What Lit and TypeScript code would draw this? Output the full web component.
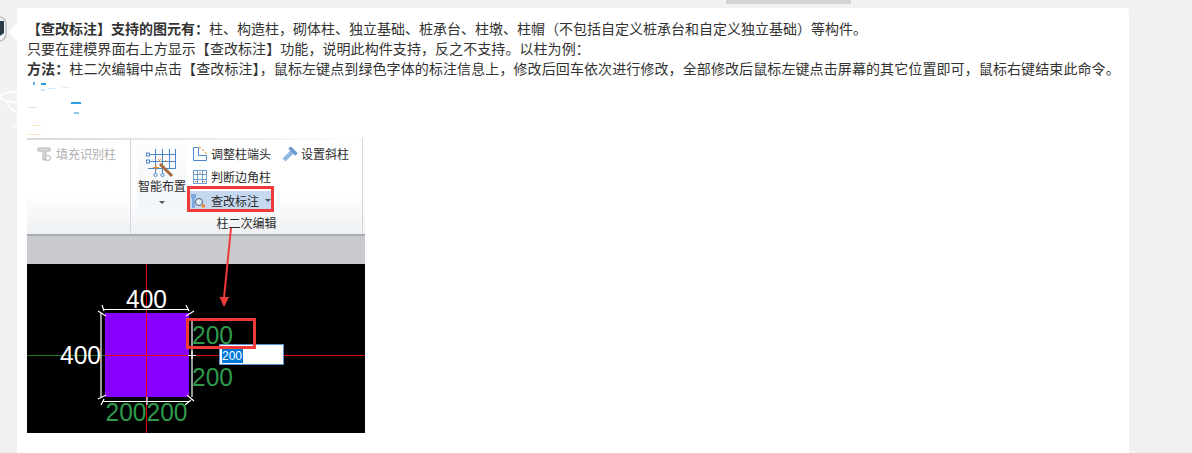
import { LitElement, html, css, svg } from "lit";
import { customElement } from "lit/decorators.js";

@customElement("app-root")
export class AppRoot extends LitElement {
  static styles = css`
    :host { display: block; width: 1192px; height: 453px; overflow: hidden; background: #f1f1f1; font-family: "Liberation Sans", "Noto Sans CJK SC", sans-serif; position: relative; }
    .tab { position: absolute; left: 726px; top: 0; width: 125px; height: 4px; background: #d3d3d3; }
    .avatar { position: absolute; left: -16px; top: 16px; }
    .swirl { position: absolute; left: 0; top: 80px; }
    .card { position: absolute; left: 17px; top: 8px; width: 1112px; height: 445px; background: #fff; border-radius: 3px 3px 0 0; box-sizing: border-box; padding: 11px 10px 0; }
    .card::before { content: ""; position: absolute; left: -9px; top: 15px; border: 9px solid transparent; border-left: 0; border-right-color: #fff; }
    .text { font-size: 14px; line-height: 20px; color: #333; white-space: nowrap; }
    .text b { font-weight: 700; }
    .l2 { letter-spacing: 0.07px; }
    .l3 { letter-spacing: 0.1px; }
    .noise { height: 59px; position: relative; }
    .noise svg { position: absolute; left: -27px; top: 0; }
    .shot { width: 338px; position: relative; }
    .ribbon { height: 96px; display: flex; background: linear-gradient(90deg, #d9d9d9, #f2f2f2 70%, #fff) top / 100% 2px no-repeat, linear-gradient(#fff 0%, #fff 55%, #eef1f3 100%); border-bottom: 2px solid #a9adb1; font-size: 12px; color: #2a2a2a; }
    .g1 { width: 104px; border-right: 1px solid #d4d8dc; padding: 7px 0 0 10px; box-sizing: border-box; color: #b0b0b0; }
    .g2 { width: 232px; border-right: 1px solid #d4d8dc; box-sizing: border-box; display: flex; flex-direction: column; }
    .g2main { display: flex; padding-left: 6px; gap: 3px; flex: 1; }
    .big { width: 50px; height: 65px; margin-top: 7px; padding-top: 3px; box-sizing: border-box; display: flex; flex-direction: column; align-items: center; background: linear-gradient(#fbfcfd, #f3f6f8); }
    .big svg { flex: none; }
    .big span { line-height: 16px; margin-top: 1px; white-space: nowrap; }
    .caret { width: 0; height: 0; border: 3px solid transparent; border-top: 3px solid #555; border-bottom: 0; margin-top: 6px; }
    .tools { display: flex; flex-direction: column; padding-top: 4px; }
    .row { display: flex; gap: 11px; height: 23px; align-items: center; padding-left: 2px; }
    .item { display: flex; align-items: center; gap: 3px; white-space: nowrap; }
    .item svg { flex: none; }
    .item.on { background: #c5d8f0; height: 19px; width: 82px; margin-top: 3px; gap: 4px; }
    .item.on .caret { margin: 0 0 0 2px; }
    .glabel { text-align: center; font-size: 12px; line-height: 16px; padding-bottom: 2px; }
    .gray { height: 28px; background: #c8cacd; }
    .cad { display: block; }
    .over { position: absolute; left: 0; top: 0; pointer-events: none; }
  `;

  render() {
    return html`
      <div class="tab"></div>
      <svg class="avatar" width="24" height="26" viewBox="0 0 24 26">
        <rect x="1" y="1" width="21" height="24" rx="7" fill="#f4f4f4" stroke="#bdbdbd" stroke-width="1.500"/>
        <path d="M5 5h15v12q-6 6-15 2z" fill="#2b3a44"/>
      </svg>
      <svg class="swirl" width="17" height="60" viewBox="0 0 17 60" fill="none" stroke="#fff" stroke-width="1.500">
        <ellipse cx="25" cy="17" rx="25" ry="6"/>
        <path d="M17 33Q8 27 7 23"/>
        <path d="M14 47h3"/>
      </svg>
      <div class="card">
        <div class="text">
          <div><b>【查改标注】支持的图元有：</b>柱、构造柱，砌体柱、独立基础、桩承台、柱墩、柱帽（不包括自定义桩承台和自定义独立基础）等构件。</div>
          <div class="l2">只要在建模界面右上方显示【查改标注】功能，说明此构件支持，反之不支持。以柱为例：</div>
          <div class="l3"><b>方法：</b>柱二次编辑中点击【查改标注】，鼠标左键点到绿色字体的标注信息上，修改后回车依次进行修改，全部修改后鼠标左键点击屏幕的其它位置即可，鼠标右键结束此命令。</div>
        </div>
        <div class="noise">
          <svg width="120" height="59" viewBox="0 79 120 59">
            <rect x="33" y="82" width="2" height="3" fill="#5ab4ea"/>
            <rect x="41" y="83" width="5" height="2" fill="#2a9fe0"/>
            <rect x="41" y="89" width="4" height="2" fill="#cfe6f7"/>
            <rect x="48" y="88" width="7" height="1" fill="#cfe6f7"/>
            <rect x="62" y="87" width="8" height="1" fill="#dff0fa"/>
            <rect x="71" y="102" width="10" height="2" fill="#2a9fe0"/>
            <rect x="74" y="112" width="5" height="2" fill="#8cc6ee"/>
            <rect x="28" y="107" width="9" height="1" fill="#cfe6f7"/>
            <rect x="33" y="125" width="8" height="1" fill="#f6e2b4"/>
            <rect x="27" y="134" width="14" height="1" fill="#f6e8c8"/>
          </svg>
        </div>
        <div class="shot">
          <div class="ribbon">
            <div class="g1">
              <div class="item">
                <svg width="16" height="16" viewBox="0 0 16 16" fill="none" stroke="#b4b4b4"><path d="M1 2h12v3H9v9H6V5H1z" fill="#ddd"/><circle cx="11" cy="12" r="2.500" fill="#fff"/></svg>
                <span>填充识别柱</span>
              </div>
            </div>
            <div class="g2">
              <div class="g2main">
                <div class="big">
                  <svg width="36" height="30" viewBox="0 0 36 30" fill="none">
                    <path d="M11.500 1v20M18.500 1v20M25.500 1v20M31.500 1v20M4 6.500h28M4 13.500h28M4 20.500h28" stroke="#4d86c9"/>
                    <g fill="#fff" stroke="#4d86c9"><rect x="2.500" y="5" width="3" height="3"/><rect x="2.500" y="12" width="3" height="3"/><circle cx="11.500" cy="27" r="1.600"/><circle cx="18.500" cy="27" r="1.600"/></g>
                    <path d="M11.500 21v4M18.500 21v4" stroke="#4d86c9"/>
                    <path d="M16 16l12 12" stroke="#a5683a" stroke-width="3"/>
                    <path d="M9 19.500h6M12 16.500v6M14 11l3 3M17 11l-3 3M21 12l2 2" stroke="#ef8a2a"/>
                  </svg>
                  <span>智能布置</span>
                  <i class="caret"></i>
                </div>
                <div class="tools">
                  <div class="row">
                    <div class="item">
                      <svg width="16" height="16" viewBox="0 0 16 16" fill="none"><path d="M1.500 1.500h5v8h8v5h-13z" stroke="#4d86c9" fill="#fff"/><path d="M7 1l2 1M10 3l2 2M13 6l1 2" stroke="#ef8a2a"/></svg>
                      <span>调整柱端头</span>
                    </div>
                    <div class="item">
                      <svg width="16" height="16" viewBox="0 0 16 16" fill="none"><path d="M10 6L2 14" stroke="#8db6e2" stroke-width="4"/><path d="M7.500 1.500l7 7" stroke="#6c9bd2" stroke-width="3.500"/></svg>
                      <span>设置斜柱</span>
                    </div>
                  </div>
                  <div class="row">
                    <div class="item">
                      <svg width="16" height="16" viewBox="0 0 16 16" fill="none" stroke="#6f9fd6"><rect x="1.500" y="1.500" width="13" height="13"/><path d="M5.500 1.500v13M10.500 1.500v13M1.500 5.500h13M1.500 10.500h13"/><path d="M3 12.500h2M11 12.500h2M8 3v2" stroke="#ef8a2a"/></svg>
                      <span>判断边角柱</span>
                    </div>
                  </div>
                  <div class="item on">
                    <svg width="17" height="16" viewBox="0 0 17 16" fill="none"><path d="M1 1h5v4H5v10H2V5H1z" fill="#7ea9dc"/><circle cx="9" cy="9" r="3.500" stroke="#4a5a70" fill="#e8f1fb"/><circle cx="13.500" cy="13" r="1.800" fill="#ef8a2a"/></svg>
                    <span>查改标注</span>
                    <i class="caret"></i>
                  </div>
                </div>
              </div>
              <div class="glabel">柱二次编辑</div>
            </div>
          </div>
          <div class="gray"></div>
          <svg class="cad" width="338" height="169" viewBox="0 0 338 169">${this.cad()}</svg>
          <svg class="over" width="338" height="298" viewBox="0 0 338 298">${this.over()}</svg>
        </div>
      </div>
    `;
  }

  cad() {
    // coordinates relative to the black panel at (27,264)
    const green = "#2e9a4a";
    const t = (x: number, y: number, s: string, fill: string) =>
      svg`<text x=${x} y=${y} fill=${fill} font-size="25" font-family="Liberation Sans, sans-serif" textLength=${s === "200200" ? 82 : 41} lengthAdjust="spacingAndGlyphs">${s}</text>`;
    return svg`
      <rect width="338" height="169" fill="#000"/>
      <rect x="78" y="49" width="84" height="84" fill="#8800ff"/>
      <line x1="0" y1="91.500" x2="78" y2="91.500" stroke="#1c7a1c"/>
      <line x1="78" y1="91.500" x2="338" y2="91.500" stroke="#e01010"/>
      <line x1="119.500" y1="0" x2="119.500" y2="169" stroke="#f00000"/>
      <g stroke="#fff" stroke-width="1.200" fill="none">
        <path d="M76 45.500h86M74 49v84M165 56v77M76 137.500h86"/>
        <path d="M71 47l8 5M75 41l2 6M159 41l3 6M159 52l8-5M71 135l8-4M74 141l3-6M160 131l7 6M158 141l6-5M116 137.500h8M120 133v8M161 91.500h8M165 87v8"/>
      </g>
      ${t(99, 44, "400", "#fff")}
      ${t(33, 100, "400", "#fff")}
      ${t(165, 79.500, "200", green)}
      ${t(165, 122, "200", green)}
      ${t(78.500, 157, "200200", green)}
      <rect x="192.500" y="80.500" width="64" height="20" fill="#fff" stroke="#5b8fd0"/>
      <rect x="195" y="82" width="21" height="17" fill="#0078d7"/>
      <text x="195" y="95.500" fill="#fff" font-size="12" font-family="Liberation Sans, sans-serif">200</text>
    `;
  }

  over() {
    // coordinates relative to the screenshot's top-left corner (27,138)
    const red = "#f03a3a";
    return svg`
      <rect x="161.500" y="49.500" width="84" height="23" fill="none" stroke=${red} stroke-width="3"/>
      <rect x="160.500" y="181.500" width="67" height="28" fill="none" stroke=${red} stroke-width="3"/>
      <path d="M204 90L197 160" stroke=${red} stroke-width="2" fill="none"/>
      <path d="M192.500 159h9.500l-5 10z" fill=${red}/>
    `;
  }
}
